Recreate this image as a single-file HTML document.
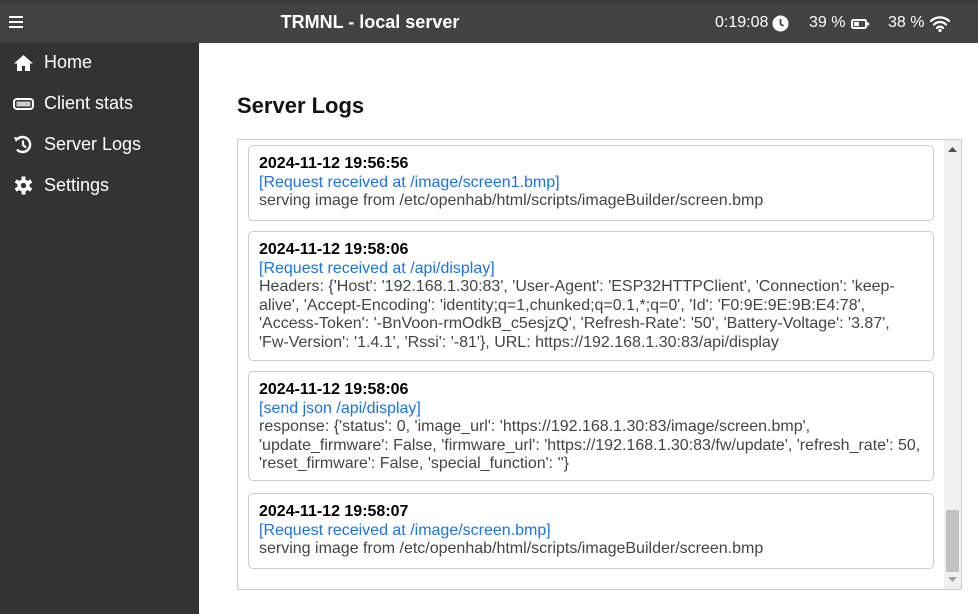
<!DOCTYPE html>
<html><head><style>
*{box-sizing:border-box;margin:0;padding:0}
body{width:978px;height:614px;overflow:hidden;font-family:"Liberation Sans",Arial,sans-serif;background:#fff;position:relative}
.top{position:absolute;left:0;top:0;width:978px;height:43px;background:#424242;border-top:2px solid #3a3a3a;color:#fff}
.title{position:absolute;left:0;width:740px;text-align:center;top:10px;font-size:18px;font-weight:bold}
.side{position:absolute;left:0;top:43px;width:199px;height:571px;background:#333;color:#fff}
.item{position:absolute;left:13px;font-size:18px;display:flex;align-items:center}
.item svg{margin-right:10px}
h1{position:absolute;left:237px;top:93px;font-size:22px;font-weight:bold;color:#111}
.box{position:absolute;left:237px;top:139px;width:725px;height:451px;border:1px solid #ccc;overflow:hidden}
.card{position:absolute;left:10px;width:686px;border:1px solid #ccc;border-radius:5px;padding:9px 10px;font-size:16px;line-height:18.5px;color:#444}
.card b{color:#000;display:block}
.card .l{color:#1a73e8}
.sb{position:absolute;right:0;top:0;width:17px;height:449px;background:#f1f1f1}
.th{position:absolute;left:2px;top:370px;width:13px;height:62px;background:#c1c1c1}
.st{position:absolute;font-size:16px;top:12px}
</style></head><body>
<div class="top">
<svg style="position:absolute;left:9px;top:14px" width="14" height="12"><rect y="0" width="14" height="2" fill="#fff"/><rect y="5" width="14" height="2" fill="#fff"/><rect y="10" width="14" height="2" fill="#fff"/></svg>
<div class="title">TRMNL - local server</div>
<div class="st" style="left:715px">0:19:08</div>
<svg style="position:absolute;left:772px;top:13px" width="17" height="17"><circle cx="8.5" cy="8.5" r="8" fill="#fff"/><path d="M8.5 4v5l3 2" stroke="#424242" stroke-width="1.8" fill="none"/></svg>
<div class="st" style="left:809px">39 %</div>
<svg style="position:absolute;left:851px;top:17px" width="18" height="10"><rect x="1" y="1" width="14" height="8" rx="1.5" stroke="#fff" stroke-width="2" fill="none"/><rect x="3" y="3" width="5" height="4" fill="#fff"/><rect x="16" y="3.5" width="2" height="3" fill="#fff"/></svg>
<div class="st" style="left:888px">38 %</div>
<svg style="position:absolute;left:929px;top:12px" width="22" height="18"><path d="M2 7a13 13 0 0 1 18 0M5 10.5a8.5 8.5 0 0 1 12 0M8 14a4 4 0 0 1 6 0" stroke="#fff" stroke-width="2.2" fill="none" stroke-linecap="round"/><circle cx="11" cy="16.5" r="1.6" fill="#fff"/></svg>
</div>
<div class="side">
<div class="item" style="top:9px"><svg width="21" height="18" viewBox="0 0 21 18"><path d="M10.5 1L1 9.5h3V17h5v-5h3v5h5V9.5h3z" fill="#fff"/></svg>Home</div>
<div class="item" style="top:50px"><svg width="21" height="14" viewBox="0 0 21 14"><rect x="1" y="2" width="19" height="10" rx="3" fill="none" stroke="#fff" stroke-width="2"/><rect x="3.5" y="4.5" width="14" height="5" fill="#ccc"/></svg>Client stats</div>
<div class="item" style="top:91px"><svg width="21" height="19" viewBox="0 0 21 19"><path d="M4 4.5A7.5 7.5 0 1 1 4 14.5" stroke="#fff" stroke-width="2.4" fill="none"/><path d="M1 2l5 1-3 4z" fill="#fff"/><path d="M10 5.5v4.5l3 2.5" stroke="#fff" stroke-width="2.2" fill="none"/></svg>Server Logs</div>
<div class="item" style="top:132px"><svg width="21" height="19" viewBox="-10 -10 20 20"><g fill="#fff"><circle r="6.5"/><rect x="-2" y="-9.5" width="4" height="19"/><rect x="-2" y="-9.5" width="4" height="19" transform="rotate(60)"/><rect x="-2" y="-9.5" width="4" height="19" transform="rotate(120)"/></g><circle r="2.8" fill="#333"/></svg>Settings</div>
</div>
<h1>Server Logs</h1>
<div class="box">
<div class="card" style="top:5px;height:76px"><b>2024-11-12 19:56:56</b><div class="l">[Request received at /image/screen1.bmp]</div>serving image from /etc/openhab/html/scripts/imageBuilder/screen.bmp</div>
<div class="card" style="top:91px;height:130px"><b>2024-11-12 19:58:06</b><div class="l">[Request received at /api/display]</div>Headers: {'Host': '192.168.1.30:83', 'User-Agent': 'ESP32HTTPClient', 'Connection': 'keep-alive', 'Accept-Encoding': 'identity;q=1,chunked;q=0.1,*;q=0', 'Id': 'F0:9E:9E:9B:E4:78', 'Access-Token': '-BnVoon-rmOdkB_c5esjzQ', 'Refresh-Rate': '50', 'Battery-Voltage': '3.87', 'Fw-Version': '1.4.1', 'Rssi': '-81'}, URL: https://192.168.1.30:83/api/display</div>
<div class="card" style="top:231px;height:110px"><b>2024-11-12 19:58:06</b><div class="l">[send json /api/display]</div>response: {'status': 0, 'image_url': 'https://192.168.1.30:83/image/screen.bmp', 'update_firmware': False, 'firmware_url': 'https://192.168.1.30:83/fw/update', 'refresh_rate': 50, 'reset_firmware': False, 'special_function': ''}</div>
<div class="card" style="top:353px;height:76px"><b>2024-11-12 19:58:07</b><div class="l">[Request received at /image/screen.bmp]</div>serving image from /etc/openhab/html/scripts/imageBuilder/screen.bmp</div>
<div class="sb"><svg style="position:absolute;left:4px;top:7px" width="9" height="5"><path d="M0 5L4.5 0 9 5z" fill="#505050"/></svg><div class="th"></div><svg style="position:absolute;left:4px;top:437px" width="9" height="5"><path d="M0 0L4.5 5 9 0z" fill="#a3a3a3"/></svg></div>
</div>
</body></html>
